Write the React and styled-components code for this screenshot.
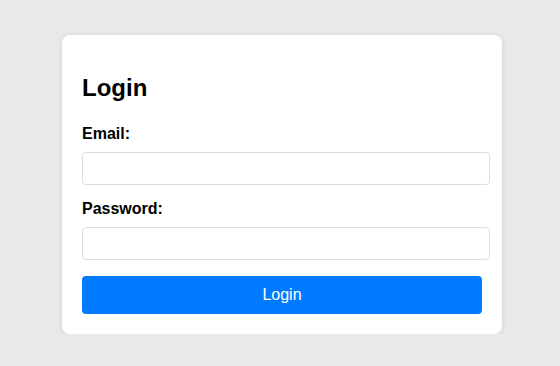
import React from "react";
import styled, { createGlobalStyle } from "styled-components";

const GlobalStyle = createGlobalStyle`
  html, body {
    margin: 0;
    padding: 0;
    background: #e9e9eb;
    font-family: "Liberation Sans", Arial, sans-serif;
  }
`;

const Page = styled.div`
  display: flex;
  justify-content: center;
  padding: 35px 0 0 4px;
`;

const Card = styled.div`
  width: 400px;
  padding: 20px;
  background: #fff;
  border-radius: 8px;
  box-shadow: 0 1px 6px rgba(0, 0, 0, 0.1);
`;

const Title = styled.h2`
  margin: 19px 0 23px;
  font-size: 24px;
  line-height: 28px;
  font-weight: bold;
  color: #000;
`;

const Form = styled.form`
  display: flex;
  flex-direction: column;
`;

const Field = styled.div`
  margin-bottom: 15px;
`;

const Label = styled.label`
  display: block;
  margin-bottom: 9px;
  font-size: 16px;
  line-height: 18px;
  font-weight: bold;
  color: #000;
`;

const Input = styled.input`
  display: block;
  box-sizing: border-box;
  width: 408px;
  height: 33px;
  padding: 4px 8px;
  border: 1px solid #ddd;
  border-radius: 4px;
  font-family: inherit;
  font-size: 14px;
  outline: none;
`;

const Button = styled.button`
  width: 400px;
  height: 38px;
  margin-top: 1px;
  border: none;
  border-radius: 4px;
  background: #007bff;
  color: #fff;
  font-family: inherit;
  font-size: 16px;
  cursor: pointer;
`;

const App = () => {
  const handleSubmit = (event) => {
    event.preventDefault();
  };

  return (
    <>
      <GlobalStyle />
      <Page>
        <Card>
          <Title>Login</Title>
          <Form onSubmit={handleSubmit}>
            <Field>
              <Label htmlFor="email">Email:</Label>
              <Input id="email" type="email" name="email" />
            </Field>
            <Field>
              <Label htmlFor="password">Password:</Label>
              <Input id="password" type="password" name="password" />
            </Field>
            <Button type="submit">Login</Button>
          </Form>
        </Card>
      </Page>
    </>
  );
};

export default App;
